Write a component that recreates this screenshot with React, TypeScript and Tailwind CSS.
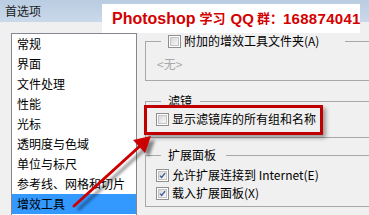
import React from "react";

const Check = ({ checked = false }: { checked?: boolean }) => (
  <div className="w-[13px] h-[13px] shrink-0 border border-[#8f8f8f] bg-white p-[1px]">
    <div className="w-full h-full border border-[#c4c4c4] bg-gradient-to-br from-[#d9d9d9] to-[#f7f7f7] flex items-center justify-center">
      {checked && (
        <svg width="9" height="9" viewBox="0 0 9 9">
          <path d="M1.2 4.6 L3.4 7 L7.8 1.4" fill="none" stroke="#3b5998" strokeWidth="1.7" />
        </svg>
      )}
    </div>
  </div>
);

const Header = ({ children, padR }: { children: React.ReactNode; padR: string }) => (
  <div className="flex h-[14px]">
    <div className="w-[16px] h-[7px] self-end border-t border-l border-[#a8a8a8]" />
    <div className={`pl-[7px] ${padR} flex items-center h-[14px]`}>{children}</div>
    <div className="flex-1 h-[7px] self-end border-t border-r border-[#a8a8a8]" />
  </div>
);

const items = [
  "常规",
  "界面",
  "文件处理",
  "性能",
  "光标",
  "透明度与色域",
  "单位与标尺",
  "参考线、网格和切片",
  "增效工具",
];

export default function App() {
  return (
    <div
      className="relative w-[369px] h-[215px] overflow-hidden bg-[#f0f0f0] flex flex-col text-[12px] leading-[14px] text-black"
      style={{ fontFamily: '"Noto Sans CJK SC", "Microsoft YaHei", sans-serif' }}
    >
      <div className="h-[22px] shrink-0 bg-gradient-to-b from-[#b9cce1] to-[#cad9ea] pl-[5px] flex items-center text-[#1a1a1a]">
        首选项
      </div>
      <div className="flex pt-[11px] pl-[11px]">
        <div className="w-[126px] h-[200px] shrink-0 border border-[#828790] bg-white flex flex-col">
          {items.map((t, i) => (
            <div
              key={t}
              className={`h-[20px] shrink-0 pl-[5px] flex items-center ${i === items.length - 1 ? "bg-[#3399ff]" : ""}`}
            >
              {t}
            </div>
          ))}
        </div>
        <div className="ml-[8px] w-[240px] shrink-0 flex flex-col pt-[1px]">
          {/* group 1 */}
          <Header padR="pr-[26px]">
            <div className="flex items-center gap-[3px]">
              <Check />
              <span className="whitespace-nowrap">附加的增效工具文件夹(A)</span>
            </div>
          </Header>
          <div className="h-[33px] border-l border-r border-b border-[#a8a8a8] pt-[9px] pl-[11px] text-[#a9a9a9]">
            &lt;无&gt;
          </div>
          {/* group 2 */}
          <div className="h-[13px]" />
          <Header padR="pr-[8px]">
            <span>滤镜</span>
          </Header>
          <div className="h-[30px] border-l border-r border-b border-[#a8a8a8] pt-[4px] pl-[10px]">
            <div className="flex items-center gap-[3px] h-[14px]">
              <Check />
              <span className="whitespace-nowrap">显示滤镜库的所有组和名称</span>
            </div>
          </div>
          {/* group 3 */}
          <div className="h-[10px]" />
          <Header padR="pr-[10px]">
            <span>扩展面板</span>
          </Header>
          <div className="h-[45px] border-l border-r border-b border-[#a8a8a8] pt-[6px] pl-[10px] flex flex-col gap-[4px]">
            <div className="flex items-center gap-[3px] h-[14px]">
              <Check checked />
              <span className="whitespace-nowrap">允许扩展连接到 Internet(E)</span>
            </div>
            <div className="flex items-center gap-[3px] h-[14px]">
              <Check checked />
              <span className="whitespace-nowrap">载入扩展面板(X)</span>
            </div>
          </div>
        </div>
      </div>

      {/* banner overlay */}
      <div
        className="absolute left-[102px] top-[4px] w-[258px] h-[29px] bg-white pl-[10px] flex items-center font-bold text-[#d40000] whitespace-nowrap"
        style={{ fontFamily: '"Liberation Sans", "Noto Sans CJK SC", sans-serif' }}
      >
        <span className="text-[16px]">Photoshop</span>
        <span className="text-[13px] ml-[4px]">学习</span>
        <span className="text-[15px] ml-[5px]">QQ</span>
        <span className="text-[13px] ml-[3px]">群：</span>
        <span className="text-[15px] tracking-[0.3px]">168874041</span>
      </div>

      {/* red highlight box */}
      <div className="absolute left-[144px] top-[105px] w-[179px] h-[30px] border-[3px] border-[#c00000] shadow-[3px_3px_4px_rgba(0,0,0,0.35)]" />

      {/* arrow */}
      <svg className="absolute left-0 top-0" width="369" height="215" viewBox="0 0 369 215">
        <defs>
          <filter id="blur" x="-20%" y="-20%" width="140%" height="140%">
            <feGaussianBlur stdDeviation="1.6" />
          </filter>
        </defs>
        <g transform="translate(4 4)" opacity="0.45" filter="url(#blur)">
          <line x1="74" y1="206" x2="140" y2="146" stroke="#000" strokeWidth="3" />
          <polygon points="151,136 145,153 133,140" fill="#000" />
        </g>
        <line x1="74" y1="206" x2="140" y2="146" stroke="#cc0000" strokeWidth="3" strokeLinecap="round" />
        <polygon points="151,136 145,153 133,140" fill="#cc0000" />
      </svg>
    </div>
  );
}
